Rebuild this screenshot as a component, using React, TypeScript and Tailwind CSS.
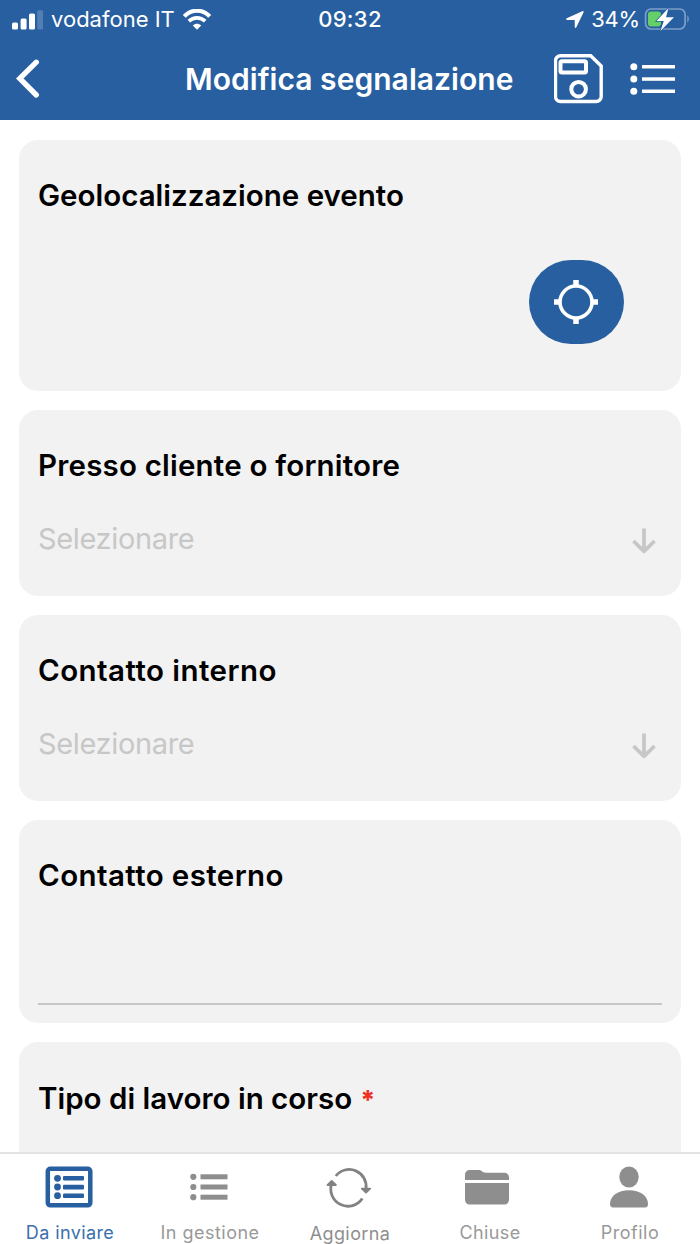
import type { ReactNode } from "react"

function StatusBar() {
  return (
    <div className="flex h-10 items-center justify-between pr-[10px] pl-3 text-white">
      <div className="flex w-[220px] items-center">
        <svg className="-mt-px" width="31" height="20" viewBox="0 0 31 20" fill="white">
          <rect x="0" y="12.5" width="6" height="7" rx="1.5" />
          <rect x="8.6" y="8.5" width="6" height="11" rx="1.5" />
          <rect x="17" y="3.5" width="6" height="16" rx="1.5" />
          <rect x="25.2" y="0.2" width="6" height="19.3" rx="1.5" opacity="0.2" />
        </svg>
        <span className="-mt-[2px] ml-2 w-[124px] text-[22px] leading-[26px] whitespace-nowrap">vodafone IT</span>
        <svg className="-mt-[2px] ml-[8px] shrink-0" width="28" height="21" viewBox="0 0 28 21" fill="none" stroke="white">
          <path d="M1.3 7.4C8.6-.2 19.4-.2 26.7 7.4" strokeWidth="4.2" />
          <path d="M5.800 12.200c4.800-4.400 11.600-4.400 16.400 0" strokeWidth="3.700" />
          <path d="M9.800 16.500c2.500-2.500 5.900-2.500 8.400 0L14 20.700z" fill="white" stroke="none" />
        </svg>
      </div>
      <span className="-mt-[2px] -ml-[2px] text-[22px] leading-[26px] font-medium tracking-[0.300px]">09:32</span>
      <div className="-mt-[2px] flex w-[220px] items-center justify-end">
        <svg width="18" height="17" viewBox="0 0 18 17" fill="white">
          <path d="M16.300.2.700 7.200c-1 .5-.7 1.700.3 1.700h7.700l.1 7.100c0 1.100 1 1.300 1.500.2L17.500 1.400c.4-.9-.2-1.600-1.200-1.200z" />
        </svg>
        <span className="ml-[7px] text-[22px] leading-[26px] tracking-[-0.200px]">34%</span>
        <svg className="ml-1" width="46" height="26" viewBox="0 0 46 26" fill="none">
          <rect x="1.600" y="3" width="39.500" height="20" rx="5.500" stroke="#fff" strokeOpacity="0.4" strokeWidth="1.700" />
          <rect x="4" y="5.500" width="13" height="15" rx="3" fill="#65cf68" />
          <path d="M43.300 9.500c2 1.200 2 5.800 0 7z" fill="#fff" fillOpacity="0.4" />
          <path d="M24.500 2 12.500 15h7.300L16.500 25 30 11.200h-8z" fill="#fff" stroke="#275fa0" strokeWidth="1.500" paintOrder="stroke" />
        </svg>
      </div>
    </div>
  )
}

function NavBar() {
  return (
    <div className="flex h-[77px] items-center text-white">
      <svg className="ml-4" width="24" height="40" viewBox="0 0 24 40" fill="none" stroke="white" strokeWidth="5.300" strokeLinecap="round" strokeLinejoin="miter">
        <path d="M20.300 3.200 3.700 19.500l16.600 16.500" />
      </svg>
      <h1 className="ml-[145px] w-[330px] text-[30px] leading-[36px] font-semibold tracking-[0.040px] whitespace-nowrap">
        Modifica segnalazione
      </h1>
      <svg className="ml-[39px]" width="50" height="50" viewBox="0 0 50 50" fill="none" stroke="white">
        <path d="M6.500 1.800h30.200L47.200 12v30.500a5 5 0 0 1-5 5H6.500a5 5 0 0 1-5-5V6.800a5 5 0 0 1 5-5z" strokeWidth="3.400" />
        <rect x="6.500" y="7.200" width="25.500" height="11.200" rx="1.500" strokeWidth="4" />
        <circle cx="24.600" cy="35.200" r="7.300" strokeWidth="4" />
      </svg>
      <svg className="ml-[26px] mt-px" width="45" height="34" viewBox="0 0 45 34" fill="white">
        <circle cx="3.800" cy="4.700" r="3.500" />
        <circle cx="3.800" cy="17" r="3.500" />
        <circle cx="3.800" cy="29.200" r="3.500" />
        <rect x="12" y="3" width="33" height="3.500" />
        <rect x="12" y="15.300" width="33" height="3.500" />
        <rect x="12" y="27.500" width="33" height="3.500" />
      </svg>
    </div>
  )
}

function Card({ title, required, className, children }: { title: string; required?: boolean; className: string; children?: ReactNode }) {
  return (
    <section className={`shrink-0 rounded-[19px] bg-[#f2f2f2] px-[19px] ${className}`}>
      <h2 className="text-[29.5px] leading-[36px] font-semibold whitespace-nowrap text-black">
        {title}
        {required && <span className="ml-2 text-[26px] font-extrabold text-[#ee3124]">*</span>}
      </h2>
      {children}
    </section>
  )
}

function SelectField() {
  return (
    <div className="mt-[38px] flex items-center justify-between pr-[5px] text-[#c7c7c7]">
      <span className="text-[29px] leading-[36px] tracking-[-0.350px]">Selezionare</span>
      <svg className="mt-[4px]" width="26" height="28" viewBox="0 0 26 28" fill="none" stroke="currentColor" strokeWidth="3.800">
        <path d="M13 1.500v23M2.500 14 13 24.300 23.500 14" strokeLinejoin="round" />
      </svg>
    </div>
  )
}

function SendIcon() {
  return (
    <svg className="-ml-[2px]" width="48" height="42" viewBox="0 0 48 42" fill="none">
      <rect x="2.800" y="2.800" width="42.500" height="36.500" rx="2.500" stroke="#275fa0" strokeWidth="4.500" />
      <g fill="#275fa0">
        <circle cx="12.500" cy="12.300" r="3.400" />
        <circle cx="12.500" cy="21" r="3.400" />
        <circle cx="12.500" cy="29.700" r="3.400" />
        <rect x="18" y="10" width="21" height="4.600" rx="1" />
        <rect x="18" y="18.800" width="21" height="4.600" rx="1" />
        <rect x="18" y="27.500" width="21" height="4.600" rx="1" />
      </g>
    </svg>
  )
}

function ListIcon() {
  return (
    <svg className="-ml-[2px]" width="38" height="42" viewBox="0 0 38 42" fill="#8e8e8e">
      <circle cx="3.300" cy="10.800" r="3.100" />
      <circle cx="3.300" cy="21" r="3.100" />
      <circle cx="3.300" cy="31.200" r="3.100" />
      <rect x="10.500" y="8.300" width="27" height="5" />
      <rect x="10.500" y="18.500" width="27" height="5" />
      <rect x="10.500" y="28.700" width="27" height="5" />
    </svg>
  )
}

function RefreshIcon() {
  return (
    <svg className="-ml-[2px]" width="46" height="42" viewBox="0 0 46 42" fill="none" stroke="#828282" strokeWidth="2.800">
      <path d="M9.800 10A17 17 0 0 1 40 23" />
      <path d="M36.300 32.500A17.200 17.200 0 0 1 5.500 18" />
      <path d="m35.800 22.700 4.200 3.800 4.200-3.800zM1.600 19 5.700 15l4.200 4z" fill="#828282" strokeWidth="1.800" strokeLinejoin="round" />
    </svg>
  )
}

function FolderIcon() {
  return (
    <svg className="-ml-[6px]" width="46" height="42" viewBox="0 0 46 42" fill="#8e8e8e">
      <path d="M1 14V9c0-3 2-5 5-5h8c2 0 3 .5 4 1.300 1.200 1 2.200 1.400 4 1.400h18c3 0 5 2 5 4.700V14z" />
      <path d="M1 17h44v16.500c0 3-2 5-5 5H6c-3 0-5-2-5-5z" />
    </svg>
  )
}

function ProfileIcon() {
  return (
    <svg className="-ml-[2px]" width="40" height="42" viewBox="0 0 40 42" fill="#8e8e8e">
      <ellipse cx="20" cy="11" rx="9.700" ry="10.500" />
      <path d="M1 38c0-8 8-13.700 19-13.700S39 30 39 38c0 2-1 3.500-3 3.500H4c-2 0-3-1.500-3-3.500z" />
    </svg>
  )
}

const tabs = [
  { label: "Da inviare", icon: <SendIcon />, text: "text-[#3a70af]" },
  { label: "In gestione", icon: <ListIcon />, text: "text-[#999] tracking-[0.500px]" },
  { label: "Aggiorna", icon: <RefreshIcon />, text: "pt-px text-[#8e8e8e]" },
  { label: "Chiuse", icon: <FolderIcon />, text: "text-[#999]" },
  { label: "Profilo", icon: <ProfileIcon />, text: "text-[#999] tracking-[0.500px]" },
]

export default function App() {
  return (
    <div className="flex h-[1244px] w-[700px] flex-col overflow-hidden bg-white font-[Inter,sans-serif]">
      <header className="h-[119.5px] shrink-0 bg-[#275fa0]">
        <StatusBar />
        <NavBar />
      </header>

      <main className="flex min-h-0 flex-1 flex-col gap-[19px] overflow-hidden px-[19px] pt-[20.5px]">
        <Card title="Geolocalizzazione evento" className="h-[250.5px] pt-[37px]">
          <div className="mt-[47px] flex justify-end pr-[38px]">
            <button className="flex h-[84px] w-[95px] items-center justify-center rounded-[42px] bg-[#275fa0]">
              <svg width="46" height="46" viewBox="0 0 46 46" fill="none" stroke="white" className="-ml-[2px]">
                <circle cx="23" cy="23" r="16" strokeWidth="3.600" />
                <path d="M23 1v6M23 39v6M1 23h6M39 23h6" strokeWidth="5.500" />
              </svg>
            </button>
          </div>
        </Card>
        <Card title="Presso cliente o fornitore" className="h-[186px] pt-[37.5px] tracking-[0.200px]">
          <SelectField />
        </Card>
        <Card title="Contatto interno" className="h-[186px] pt-[37.5px] tracking-[0.450px]">
          <SelectField />
        </Card>
        <Card title="Contatto esterno" className="h-[203.5px] pt-[37.5px] tracking-[0.400px]">
          <div className="h-[111.5px] border-b-2 border-[#c7c7c7]" />
        </Card>
        <Card title="Tipo di lavoro in corso" required className="h-[186px] pt-[37.5px]" />
      </main>

      <nav className="grid h-[92px] shrink-0 grid-cols-5 border-t-2 border-[#e2e2e2] bg-white">
        {tabs.map((tab) => (
          <button key={tab.label} className="flex flex-col items-center pt-3 tracking-[0.400px]">
            {tab.icon}
            <span className={`mt-3 text-[18px] leading-[26px] whitespace-nowrap ${tab.text}`}>{tab.label}</span>
          </button>
        ))}
      </nav>
    </div>
  )
}
